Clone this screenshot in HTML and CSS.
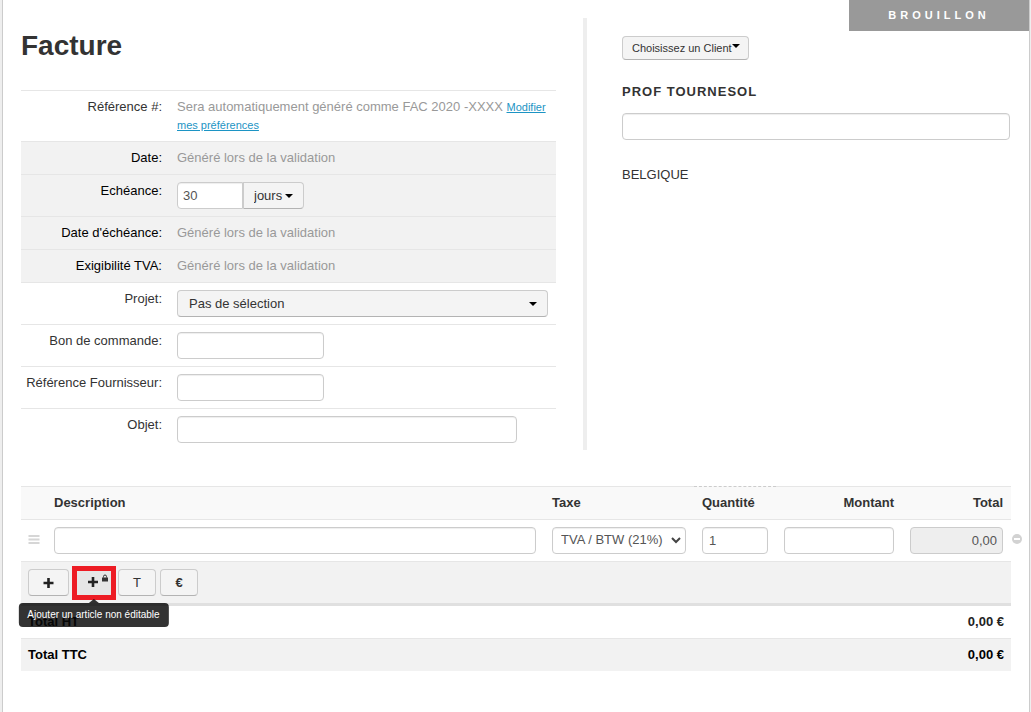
FILE: index.html
```html
<!DOCTYPE html>
<html lang="fr">
<head>
<meta charset="utf-8">
<title>Facture</title>
<link rel="stylesheet" href="styles.css">
</head>
<body>
<main class="sheet">
  <div class="status">BROUILLON</div>
  <div class="top">
    <section class="details">
      <h1>Facture</h1>
      <div class="row">
        <div class="label">Référence #:</div>
        <div class="value muted">Sera automatiquement généré comme FAC 2020 -XXXX <a href="#">Modifier mes préférences</a></div>
      </div>
      <div class="row shaded">
        <div class="label">Date:</div>
        <div class="value muted">Généré lors de la validation</div>
      </div>
      <div class="row shaded">
        <label class="label" for="delay">Echéance:</label>
        <div class="value group">
          <input class="field delay" id="delay" type="text" value="30">
          <span class="picker picker-unit"><select aria-label="Unité"><option>jours</option></select></span>
        </div>
      </div>
      <div class="row shaded">
        <div class="label">Date d'échéance:</div>
        <div class="value muted">Généré lors de la validation</div>
      </div>
      <div class="row shaded">
        <div class="label">Exigibilité TVA:</div>
        <div class="value muted">Généré lors de la validation</div>
      </div>
      <div class="row">
        <label class="label" for="project">Projet:</label>
        <div class="value"><span class="picker picker-wide"><select id="project"><option>Pas de sélection</option></select></span></div>
      </div>
      <div class="row">
        <label class="label" for="order">Bon de commande:</label>
        <div class="value"><input class="field short" id="order" type="text"></div>
      </div>
      <div class="row">
        <label class="label" for="supplier">Référence Fournisseur:</label>
        <div class="value"><input class="field short" id="supplier" type="text"></div>
      </div>
      <div class="row">
        <label class="label" for="subject">Objet:</label>
        <div class="value"><input class="field long" id="subject" type="text"></div>
      </div>
    </section>
    <section class="client">
      <span class="picker picker-small"><select aria-label="Client"><option>Choisissez un Client</option></select></span>
      <h2>PROF TOURNESOL</h2>
      <input class="field" type="text" aria-label="Adresse">
      <p>BELGIQUE</p>
    </section>
  </div>

  <table class="items">
    <colgroup>
      <col class="c-handle"><col><col class="c-tax"><col class="c-qty"><col class="c-amount"><col class="c-total"><col class="c-remove">
    </colgroup>
    <thead>
      <tr>
        <th></th><th>Description</th><th>Taxe</th><th class="sorted">Quantité</th><th class="num">Montant</th><th class="num">Total</th><td class="gutter"></td>
      </tr>
    </thead>
    <tbody>
      <tr>
        <td class="handle">
          <svg width="12" height="10" viewBox="0 0 12 10" aria-hidden="true"><path d="M0.500 1h11M0.500 4.500h11M0.500 8h11" stroke="#d6d6d6" stroke-width="1.800"/></svg>
        </td>
        <td><input class="field" type="text" aria-label="Description"></td>
        <td>
          <div class="tax">
            <select class="field" aria-label="Taxe"><option>TVA / BTW (21%)</option></select>
            <svg width="10" height="7" viewBox="0 0 10 7" aria-hidden="true"><path d="M1 1l4 4 4-4" fill="none" stroke="#444" stroke-width="2"/></svg>
          </div>
        </td>
        <td><input class="field" type="text" value="1" aria-label="Quantité"></td>
        <td><input class="field num" type="text" aria-label="Montant"></td>
        <td><input class="field num" type="text" value="0,00" disabled aria-label="Total"></td>
        <td class="gutter">
          <button class="remove" aria-label="Supprimer"><svg width="10" height="10" viewBox="0 0 10 10"><circle cx="5" cy="5" r="5" fill="#d2d2d2"/><path d="M2 5h6" stroke="#fff" stroke-width="2"/></svg></button>
        </td>
      </tr>
      <tr class="actions">
        <td colspan="6">
          <div class="buttons">
            <button class="btn wide" aria-label="Ajouter un article"><svg width="12" height="12" viewBox="0 0 12 12"><path d="M5.500 1v10M0.500 6h10" stroke="#222" stroke-width="2.600"/></svg></button>
            <button class="btn wide hovered" aria-describedby="tip" aria-label="Ajouter un article non éditable">
              <svg width="20" height="16" viewBox="0 0 20 16"><path d="M5 4v10M0 9h10" stroke="#222" stroke-width="2.600"/><path d="M15.500 4.500V3.500a1.500 1.500 0 0 1 3 0v1" fill="none" stroke="#333"/><path d="M14 4.500h6v4h-6z" fill="#333"/></svg>
              <span class="tooltip" id="tip" role="tooltip">Ajouter un article non éditable</span>
            </button>
            <button class="btn">T</button>
            <button class="btn euro">€</button>
          </div>
        </td>
        <td class="gutter"></td>
      </tr>
    </tbody>
    <tfoot>
      <tr class="subtotal"><th colspan="4">Total HT</th><td colspan="2" class="num">0,00 €</td><td class="gutter"></td></tr>
      <tr class="grand"><th colspan="4">Total TTC</th><td colspan="2" class="num">0,00 €</td><td class="gutter"></td></tr>
    </tfoot>
  </table>
</main>
</body>
</html>
```
FILE: styles.css
```css
* { box-sizing: border-box; }

body {
  margin: 0;
  background: #eee;
  color: #333;
  font: 13px/18px "Liberation Sans", Arial, sans-serif;
}

input, select, button { margin: 0; font: inherit; color: inherit; }

.sheet {
  position: relative;
  min-height: 100vh;
  margin: 0 1px 0 2px;
  padding: 18px 0 36px 18px;
  background: #fff;
  border: solid #ccc;
  border-width: 0 1px;
}

.status {
  position: absolute;
  top: 0;
  right: 0;
  width: 180px;
  background: #999;
  color: #fff;
  font-size: 11px;
  font-weight: bold;
  line-height: 31px;
  letter-spacing: 4px;
  text-align: center;
}

.top { display: flex; margin-right: 19px; }

.details {
  flex: 1;
  padding-right: 27px;
  border-right: 4px solid #eee;
}

h1 { margin: 0 0 16px; font-size: 28px; line-height: 56px; }

.row { display: flex; border-top: 1px solid #e6e6e6; }
.shaded { background: #f2f2f2; }
.label { width: 148px; padding: 7px 7px 7px 0; text-align: right; }
.shaded .label { color: #000; }
.value { flex: 1; padding: 7px 8px; }
.muted { color: #999; }
.value a { color: #1c94c4; font-size: 11px; }
.group { display: flex; }

.field {
  display: block;
  width: 100%;
  height: 27px;
  padding: 0 8px 0 6px;
  background: #fff;
  border: 1px solid #ccc;
  border-radius: 4px;
  box-shadow: inset 0 1px 1px #eee;
  color: #555;
}
.field.num { text-align: right; padding-right: 5px; }
.field:disabled { background: #eee; }
.short { width: 147px; }
.long { width: 340px; max-width: 100%; }
.delay { width: 66px; padding-left: 5px; border-radius: 4px 0 0 4px; }

.picker { position: relative; display: block; }
.picker select {
  display: block;
  width: 100%;
  height: 27px;
  padding: 0 22px 0 11px;
  appearance: none;
  background: #f4f4f4;
  border: 1px solid #ccc;
  border-bottom-color: #b3b3b3;
  border-radius: 4px;
}
.picker::after {
  content: "";
  position: absolute;
  top: 12px;
  right: 11px;
  border: 4px solid transparent;
  border-top-color: #000;
  border-bottom: 0;
}
.picker-unit { width: 61px; }
.picker-unit select { padding: 0 18px 0 10px; border-radius: 0 4px 4px 0; }
.picker-small { width: 127px; font-size: 11px; }
.picker-small select { height: 24px; padding: 0 10px 0 9px; }
.picker-small::after { top: 8px; right: 9px; }

.client { width: 423px; padding: 18px 0 0 35px; }
h2 { margin: 23px 0 12px; font-size: 13px; line-height: 18px; letter-spacing: 1px; }
.client p { margin: 26px 0 0; }

.items {
  width: 100%;
  margin-top: 36px;
  table-layout: fixed;
  border-spacing: 0;
}
.c-handle { width: 25px; }
.c-tax { width: 150px; }
.c-qty { width: 82px; }
.c-amount { width: 126px; }
.c-total { width: 109px; }
.c-remove { width: 18px; }

.items th, .items td {
  padding: 7px 8px;
  border-top: 1px solid #e6e6e6;
  text-align: left;
  vertical-align: top;
}
.items thead th { background: #f9f9f9; }
.items thead .sorted { border-top: 1px dashed #ccc; }
.items .num { text-align: right; }
.items .gutter { padding: 7px 1px; border: 0; background: none; }
.items .handle { padding: 15px 0 0 7px; }
.items svg { display: block; }
.items .actions td { background: #f2f2f2; border-bottom: 3px solid #e0e0e0; padding: 7px; }
.items tfoot th, .items tfoot td { padding: 7px; color: #000; font-weight: bold; }
.items .subtotal th, .items .subtotal td { border-top: 0; color: #222; }
.items .grand th, .items .grand td { background: #f2f2f2; }
.items .actions .gutter, .items .grand .gutter { background: none; border: 0; }

.tax { position: relative; }
.tax select { appearance: none; padding: 0 20px 2px 8px; }
.tax svg { position: absolute; top: 10px; right: 5px; pointer-events: none; }

.remove { display: block; margin-top: 8px; padding: 0; border: 0; background: none; }

.buttons { display: flex; gap: 4px; }
.btn {
  position: relative;
  display: flex;
  align-items: center;
  justify-content: center;
  width: 38px;
  height: 27px;
  padding: 0;
  background: #f4f4f4;
  border: 1px solid #ccc;
  border-bottom-color: #b3b3b3;
  border-radius: 4px;
}
.btn.wide { width: 41px; }
.euro { font-weight: bold; }
.hovered { background: #e6e6e6; }
.hovered svg { margin: -3px 0 0 8px; }
.hovered::before {
  content: "";
  position: absolute;
  inset: -4px -3px -5px -2px;
  border: 5px solid #ed1c24;
}

.tooltip {
  position: absolute;
  top: 33px;
  left: 50%;
  transform: translateX(-50%);
  padding: 3px 9px;
  background: rgba(0, 0, 0, 0.8);
  border-radius: 4px;
  color: #fff;
  font-size: 10px;
  white-space: nowrap;
}
.tooltip::before {
  content: "";
  position: absolute;
  bottom: 100%;
  left: 50%;
  margin-left: -5px;
  border: 5px solid transparent;
  border-top: 0;
  border-bottom: 4px solid rgba(0, 0, 0, 0.8);
}
```
